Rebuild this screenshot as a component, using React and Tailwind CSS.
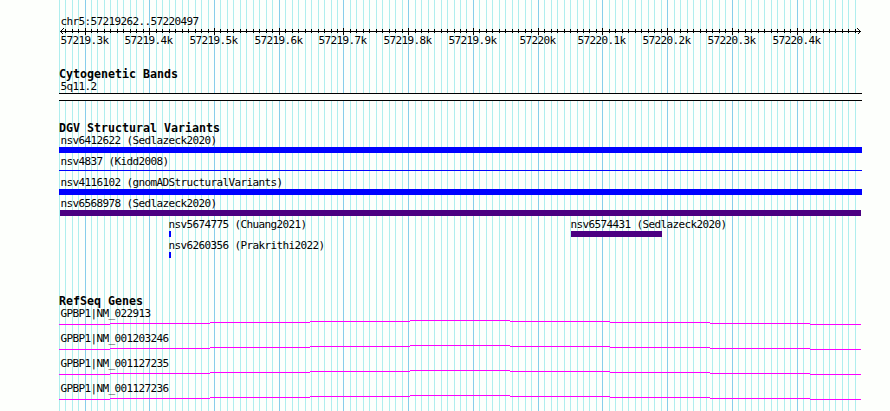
const START = 85;
const STEP = 64.74;

const majors = Array.from({ length: 12 }, (_, i) => Math.floor(START + i * STEP));
const minors = Array.from({ length: 124 }, (_, i) => i - 4)
  .filter((i) => i % 10 !== 0)
  .map((i) => Math.floor(START + (i * STEP) / 10 + 0.001));

const rulerLabels = [
  "57219.3k", "57219.4k", "57219.5k", "57219.6k", "57219.7k", "57219.8k",
  "57219.9k", "57220k", "57220.1k", "57220.2k", "57220.3k", "57220.4k",
];

const variants = [
  { name: "nsv6412622 (Sedlazeck2020)", bar: "ml-[59px] w-[803px] h-1.5 bg-[#0000ff]" },
  { name: "nsv4837 (Kidd2008)", bar: "ml-[59px] mt-0.5 w-[803px] h-px bg-[#0000ff]" },
  { name: "nsv4116102 (gnomADStructuralVariants)", bar: "ml-[59px] w-[803px] h-1.5 bg-[#0000ff]" },
  { name: "nsv6568978 (Sedlazeck2020)", bar: "ml-[60px] w-[801px] h-1.5 bg-[#4b0082]" },
];

const genes = [
  "GPBP1|NM_022913",
  "GPBP1|NM_001203246",
  "GPBP1|NM_001127235",
  "GPBP1|NM_001127236",
];

function GridLines() {
  return (
    <svg width="890" height="411" className="col-start-1 row-start-1" shapeRendering="crispEdges">
      {minors.map((x) => (
        <rect key={x} x={x} y="0" width="1" height="411" fill="#afeeee" />
      ))}
      {majors.map((x) => (
        <rect key={x} x={x} y="0" width="1" height="411" fill="#87ceeb" />
      ))}
    </svg>
  );
}

function Ruler() {
  return (
    <svg width="890" height="20" className="block" shapeRendering="crispEdges">
      <rect x="60" y="4" width="801" height="1" />
      {minors.filter((x) => x > 60 && x < 860).map((x) => (
        <rect key={x} x={x} y="2" width="1" height="4" />
      ))}
      {majors.map((x) => (
        <rect key={x} x={x} y="1" width="1" height="7" />
      ))}
      <path d="M63.5 1.5L60.5 4.5L63.5 7.5M857.5 1.5L860.5 4.5L857.5 7.5" fill="none" stroke="#000" />
      {rulerLabels.map((label, i) => (
        <text key={label} x={majors[i] - 0.5 - label.length * 3} y="17">{label}</text>
      ))}
    </svg>
  );
}

function Heading({ children }) {
  return (
    <h2 className="pl-[59px] h-[13px] leading-[13px] text-[11.63px] font-bold tracking-normal">{children}</h2>
  );
}

function Label({ children }) {
  return <div className="pl-[0.5px] h-[13px] leading-[13px] whitespace-pre">{children}</div>;
}

function Gene({ name }) {
  return (
    <div className="h-[25px]">
      <div className="pl-[60px]">
        <Label>{name}</Label>
      </div>
      <svg width="890" height="5" className="block" shapeRendering="crispEdges">
        {[4, 3, 2, 1, 0, 1, 2, 3, 4].map((y, i) => {
          const x = i === 0 ? 59 : 10 + i * 100;
          const end = Math.min(110 + i * 100, 861);
          return <rect key={i} x={x} y={y} width={end - x} height="1" fill="#ff00ff" />;
        })}
      </svg>
    </div>
  );
}

export default function App() {
  return (
    <div className="grid w-[890px] h-[411px] overflow-hidden bg-[#fdfffc] text-black font-['DejaVu_Sans_Mono',monospace] text-[11px] tracking-[-0.62px]">
      <GridLines />
      <main className="col-start-1 row-start-1 flex flex-col pt-[15px]">
        <div className="pl-[60px] mb-[-1px]">
          <Label>chr5:57219262..57220497</Label>
        </div>
        <Ruler />

        <section className="pt-[21px]">
          <Heading>Cytogenetic Bands</Heading>
          <div className="pl-[60px] -mt-px">
            <Label>5q11.2</Label>
          </div>
          <div className="ml-[59px] w-[803px] h-2 border-y border-black bg-[#fdfffc]" />
        </section>

        <section className="pt-[21px]">
          <Heading>DGV Structural Variants</Heading>
          <div className="-mt-px">
            {variants.map(({ name, bar }) => (
              <div key={name} className="flex flex-col h-[21px]">
                <div className="pl-[60px]">
                  <Label>{name}</Label>
                </div>
                <div className={bar} />
              </div>
            ))}
            <div className="flex h-[21px]">
              <div className="pl-[168px] w-[570px]">
                <Label>nsv5674775 (Chuang2021)</Label>
                <div className="ml-px w-0.5 h-1.5 bg-[#0000ff]" />
              </div>
              <div>
                <Label>nsv6574431 (Sedlazeck2020)</Label>
                <div className="ml-px w-[91px] h-1.5 bg-[#4b0082]" />
              </div>
            </div>
            <div className="pl-[168px] h-[21px]">
              <Label>nsv6260356 (Prakrithi2022)</Label>
              <div className="ml-px w-0.5 h-1.5 bg-[#0000ff]" />
            </div>
          </div>
        </section>

        <section className="pt-[35px]">
          <Heading>RefSeq Genes</Heading>
          <div className="-mt-px">
            {genes.map((name) => (
              <Gene key={name} name={name} />
            ))}
          </div>
        </section>
      </main>
    </div>
  );
}
